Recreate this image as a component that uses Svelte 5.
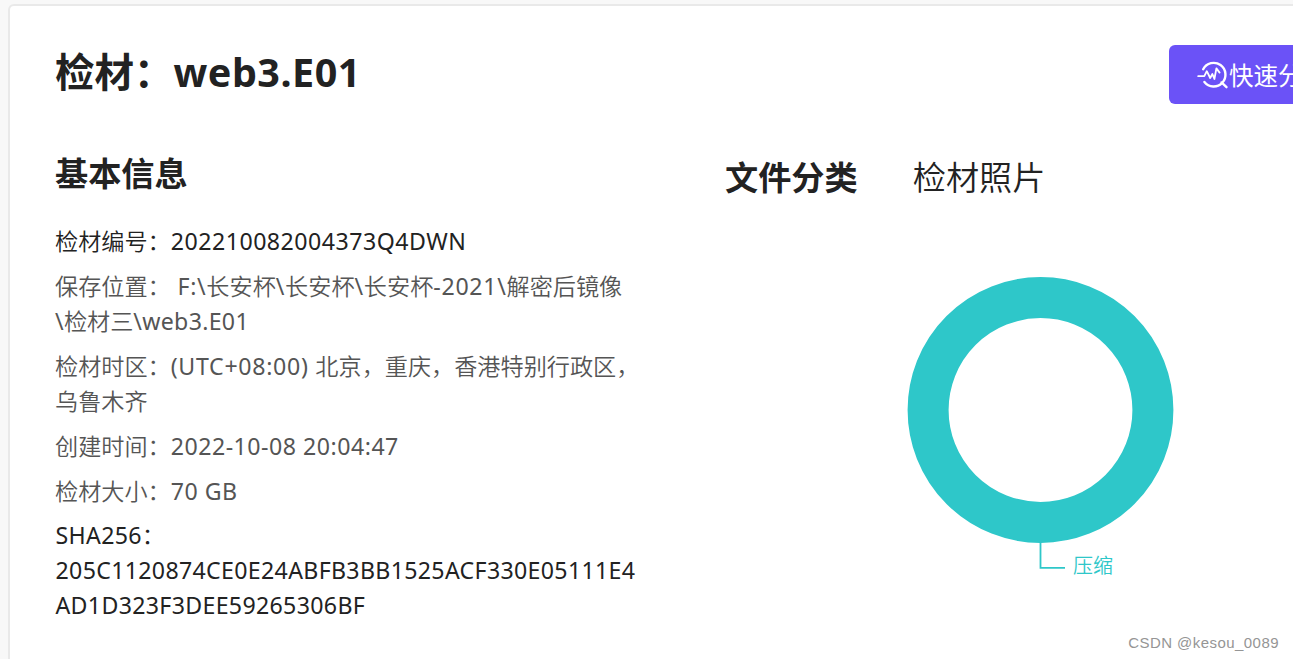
<script lang="ts">
  type Part = { text: string; latin?: boolean };
  type Row = { name: string; strong?: boolean; lines: Part[][] };

  const rows: Row[] = [
    { name: 'code', strong: true, lines: [[{ text: '检材编号：' }, { text: '202210082004373Q4DWN', latin: true }]] },
    {
      name: 'path',
      lines: [
        [
          { text: '保存位置：' }, { text: ' F:\\', latin: true }, { text: '长安杯' }, { text: '\\', latin: true },
          { text: '长安杯' }, { text: '\\', latin: true }, { text: '长安杯' }, { text: '-2021\\', latin: true },
          { text: '解密后镜像' },
        ],
        [{ text: '\\', latin: true }, { text: '检材三' }, { text: '\\web3.E01', latin: true }],
      ],
    },
    {
      name: 'zone',
      lines: [
        [{ text: '检材时区：' }, { text: '(UTC+08:00) ', latin: true }, { text: '北京，重庆，香港特别行政区，' }],
        [{ text: '乌鲁木齐' }],
      ],
    },
    { name: 'time', lines: [[{ text: '创建时间：' }, { text: '2022-10-08 20:04:47', latin: true }]] },
    { name: 'size', lines: [[{ text: '检材大小：' }, { text: '70 GB', latin: true }]] },
    {
      name: 'hash',
      strong: true,
      lines: [
        [{ text: 'SHA256', latin: true }, { text: '：' }],
        [{ text: '205C1120874CE0E24ABFB3BB1525ACF330E05111E4', latin: true }],
        [{ text: 'AD1D323F3DEE59265306BF', latin: true }],
      ],
    },
  ];
</script>

<div class="page">
  <main class="card">
    <header>
      <h1>检材：<span>web3.E01</span></h1>
      <button>
        <svg width="32" height="32" viewBox="0 0 32 32" fill="none" stroke="#fff" stroke-width="2.4" stroke-linecap="round" stroke-linejoin="round">
          <path d="M6.2 10.2A11.8 11.8 0 1 1 7.4 23M24.5 23.4L29.5 28.2" />
          <path d="M1.2 17.2H7.3L9.8 12.2L13.2 19L15.4 15L17.4 20L19.4 9.4L22.6 13.6" stroke-width="1.8" />
        </svg>
        <span>快速分析</span>
      </button>
    </header>

    <div class="body">
      <section class="info">
        <h2>基本信息</h2>
        {#each rows as row}
          <div class="row {row.name}" class:strong={row.strong}>
            {#each row.lines as line}
              <div class="line">{#each line as part}<span class:latin={part.latin}>{part.text}</span>{/each}</div>
            {/each}
          </div>
        {/each}
      </section>

      <section class="files">
        <nav>
          <span class="active">文件分类</span>
          <span>检材照片</span>
        </nav>
        <svg class="chart" width="500" height="340" viewBox="0 0 500 340">
          <circle cx="240.5" cy="150" r="112.4" fill="none" stroke="#2ec7c9" stroke-width="41" />
          <path d="M240.5 282V307.8H265" fill="none" stroke="#2ec7c9" stroke-width="1.8" />
          <text x="273" y="313">压缩</text>
        </svg>
      </section>
    </div>
  </main>
  <div class="mark">CSDN @kesou_0089</div>
</div>

<style>
  .page {
    position: relative;
    height: 659px;
    box-sizing: border-box;
    padding: 4px 0 0 8px;
    overflow: hidden;
    background: #f8f8f8;
    color: #222;
    font-family: "Noto Sans", "Noto Sans CJK SC", sans-serif;
  }
  .card {
    width: 1400px;
    height: 700px;
    box-sizing: border-box;
    padding: 39px 0 0 45px;
    background: #fff;
    border: 2px solid #e9e9e9;
    border-radius: 6px;
  }
  header {
    display: flex;
    height: 59px;
  }
  h1 {
    width: 1114px;
    margin: 0;
    font-size: 39.5px;
    font-weight: 700;
    line-height: 55px;
    white-space: nowrap;
  }
  h1 span { letter-spacing: 0.5px; }
  button {
    display: flex;
    align-items: center;
    width: 180px;
    height: 59px;
    padding: 0 0 0 28px;
    border: 0;
    border-radius: 6px;
    background: #6b52f7;
    color: #fff;
    font: 24.5px/59px "Noto Sans CJK SC", sans-serif;
    white-space: nowrap;
  }
  .body { display: flex; }
  .info { width: 670px; padding-top: 45px; }
  h2 {
    margin: 0 0 25px;
    font-size: 33.2px;
    font-weight: 700;
    line-height: 50px;
  }
  .row {
    margin-bottom: 10px;
    color: #555;
    font-size: 23.15px;
    font-weight: 350;
    line-height: 35px;
  }
  .row.strong { color: #222; }
  .row.size { margin-bottom: 9px; }
  .line { height: 35px; white-space: pre; }
  .latin { font-weight: 400; letter-spacing: 0.5px; }
  .path .latin, .zone .latin { letter-spacing: 0.7px; }
  .path .line:last-child .latin { letter-spacing: 0.3px; }
  .hash .latin { letter-spacing: 0.33px; }
  .hash { padding-left: 0.5px; }
  .files { padding-top: 49px; }
  nav {
    display: flex;
    gap: 55px;
    font-size: 33.2px;
    font-weight: 350;
    line-height: 50px;
  }
  .active { font-weight: 700; }
  .chart { display: block; margin: 57px 0 0 75px; }
  .chart text { fill: #2ec7c9; font-size: 20px; font-weight: 350; }
  .mark {
    position: absolute;
    right: 14px;
    bottom: 6px;
    color: #959595;
    font: 15px/20px "Liberation Sans", sans-serif;
    letter-spacing: 0.45px;
  }
</style>
